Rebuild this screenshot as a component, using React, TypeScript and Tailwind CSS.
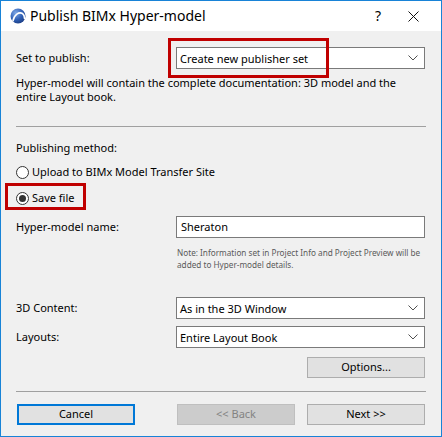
import type { ReactNode } from "react";

const font = { fontFamily: '"Noto Sans", "Open Sans", sans-serif' };

function Chevron() {
  return (
    <svg width="10" height="6" viewBox="0 0 10 6" className="shrink-0">
      <polyline points="0.5,0.5 5,5 9.5,0.5" fill="none" stroke="#505050" strokeWidth="1" />
    </svg>
  );
}

function Select({ value, children }: { value: string; children?: ReactNode }) {
  return (
    <div className="relative flex h-[22px] w-[249px] items-center justify-between border border-[#7a7a7a] bg-white pl-[3px] pr-[6px]">
      <span className="text-[11px] leading-none text-black">{value}</span>
      <Chevron />
      {children}
    </div>
  );
}

function Radio({ checked, label }: { checked?: boolean; label: string }) {
  return (
    <div className="flex h-[14px] items-center gap-[3px]">
      <span className="flex h-[13px] w-[13px] items-center justify-center rounded-full border border-[#333333] bg-white">
        {checked && <span className="h-[7px] w-[7px] rounded-full bg-[#333333]" />}
      </span>
      <span className="text-[11px] leading-[14px] text-black">{label}</span>
    </div>
  );
}

function Button({ label, variant }: { label: string; variant?: "default" | "disabled" }) {
  if (variant === "default") {
    return (
      <div className="flex h-[21px] w-[118px] items-center justify-center border-2 border-[#0078d7] bg-[#e1e1e1] text-[11px] text-black">
        {label}
      </div>
    );
  }
  if (variant === "disabled") {
    return (
      <div className="flex h-[21px] w-[118px] items-center justify-center border border-[#bfbfbf] bg-[#cccccc] text-[11px] text-[#838383]">
        {label}
      </div>
    );
  }
  return (
    <div className="flex h-[21px] w-[118px] items-center justify-center border border-[#adadad] bg-[#e1e1e1] text-[11px] text-black">
      {label}
    </div>
  );
}

function Logo() {
  return (
    <svg width="16" height="16" viewBox="0 0 16 16">
      <defs>
        <radialGradient id="lg" cx="35%" cy="30%" r="75%">
          <stop offset="0%" stopColor="#7fa8e6" />
          <stop offset="60%" stopColor="#2f5fb5" />
          <stop offset="100%" stopColor="#1d3f86" />
        </radialGradient>
      </defs>
      <circle cx="8" cy="8" r="7.5" fill="url(#lg)" />
      <path d="M3 13 C4 6.5 9 3.5 12.5 5.5 C14 6.5 14.5 8.5 14.5 10.5" fill="none" stroke="#ffffff" strokeWidth="1.6" strokeLinecap="round" />
    </svg>
  );
}

export default function App() {
  return (
    <div style={font} className="flex h-[437px] w-[442px] flex-col border border-[#1883d7] bg-[#f0f0f0]">
      <div className="flex h-[30px] shrink-0 items-center bg-white pl-[9px]">
        <Logo />
        <span className="ml-[4px] text-[14px] leading-none text-black">Publish BIMx Hyper-model</span>
        <span className="ml-auto mr-[27px] text-[14px] leading-none text-black">?</span>
        <svg width="11" height="11" viewBox="0 0 11 11" className="mr-[22px]">
          <path d="M0.5 0.5 L10.5 10.5 M10.5 0.5 L0.5 10.5" stroke="#111111" strokeWidth="1" />
        </svg>
      </div>

      <div className="flex flex-col px-[15px] text-black">
        <div className="mt-[16px] flex items-center">
          <span className="w-[160px] text-[11px]">Set to publish:</span>
          <Select value="Create new publisher set">
            <div className="absolute left-[-9px] top-[-10px] h-[40px] w-[161px] border-[3px] border-[#c00000]" />
          </Select>
        </div>

        <p className="mt-[7px] text-[11px] leading-[14px]">
          Hyper-model will contain the complete documentation: 3D model and the
          <br />
          entire Layout book.
        </p>

        <div className="mt-[22px] h-px bg-[#a0a0a0]" />

        <p className="mt-[14px] text-[11px] leading-[14px]">Publishing method:</p>

        <div className="mt-[10px]">
          <Radio label="Upload to BIMx Model Transfer Site" />
        </div>
        <div className="relative mt-[12px]">
          <Radio checked label="Save file" />
          <div className="absolute left-[-11px] top-[-8px] h-[27px] w-[81px] border-[3px] border-[#c00000]" />
        </div>

        <div className="mt-[11px] flex items-center">
          <span className="w-[160px] text-[11px]">Hyper-model name:</span>
          <div className="flex h-[22px] w-[249px] items-center border border-[#7a7a7a] bg-white pl-[4px] text-[11px]">
            Sheraton
          </div>
        </div>

        <p className="ml-[161px] mt-[9px] whitespace-nowrap text-[8.2px] leading-[12px] text-[#5a5a5a]">
          Note: Information set in Project Info and Project Preview will be
          <br />
          added to Hyper-model details.
        </p>

        <div className="mt-[26px] flex items-center">
          <span className="w-[160px] text-[11px]">3D Content:</span>
          <Select value="As in the 3D Window" />
        </div>

        <div className="mt-[7px] flex items-center">
          <span className="w-[160px] text-[11px]">Layouts:</span>
          <Select value="Entire Layout Book" />
        </div>

        <div className="mt-[9px] flex justify-end pr-px">
          <Button label="Options..." />
        </div>

        <div className="mt-[13px] h-px bg-[#a0a0a0]" />

        <div className="mt-[12px] flex items-center pl-px pr-px">
          <Button label="Cancel" variant="default" />
          <div className="ml-[42px]">
            <Button label="<< Back" variant="disabled" />
          </div>
          <div className="ml-auto">
            <Button label="Next >>" />
          </div>
        </div>
      </div>
    </div>
  );
}
